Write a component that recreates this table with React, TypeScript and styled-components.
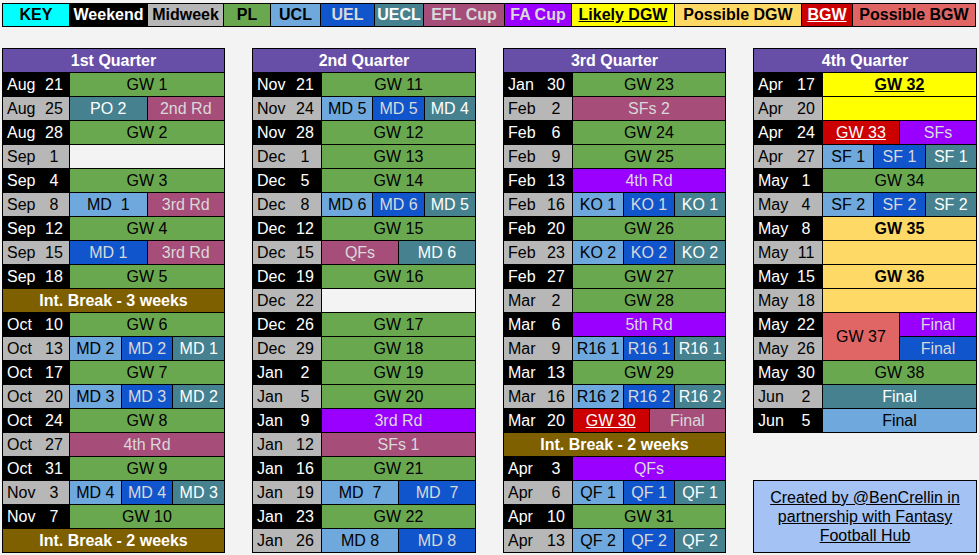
import * as React from 'react';
import styled, { createGlobalStyle } from 'styled-components';

type Kind =
	| 'pl'
	| 'ucl'
	| 'uel'
	| 'uecl'
	| 'efl'
	| 'fa'
	| 'likely'
	| 'possible'
	| 'bgw'
	| 'pbgw'
	| 'empty';

type Swatch = { bg: string; fg: string; bold?: boolean; u?: boolean };

const palette: Record<Kind, Swatch> = {
	pl: { bg: '#6aa84f', fg: '#000000' },
	ucl: { bg: '#6fa8dc', fg: '#000000' },
	uel: { bg: '#1155cc', fg: '#d9d9d9' },
	uecl: { bg: '#45818e', fg: '#ffffff' },
	efl: { bg: '#a64d79', fg: '#d9d9d9' },
	fa: { bg: '#9900ff', fg: '#d9d9d9' },
	likely: { bg: '#ffff00', fg: '#000000', bold: true, u: true },
	possible: { bg: '#ffd966', fg: '#000000', bold: true },
	bgw: { bg: '#cc0000', fg: '#ffffff', u: true },
	pbgw: { bg: '#e06666', fg: '#000000' },
	empty: { bg: '#f3f3f3', fg: '#000000' },
};

// [text, kind, span of 6, rows]
type Part = [string, Kind, number?, number?];
type Row =
	| { brk: string }
	| { date: string; we: boolean; parts: Part[] };

const gw = (n: number): Part[] => [[`GW ${n}`, 'pl', 6]];
const eur = (a: string, b: string, c: string): Part[] => [
	[a, 'ucl', 2],
	[b, 'uel', 2],
	[c, 'uecl', 2],
];

const r = (date: string, we: boolean, parts: Part[]): Row => ({ date, we, parts });

const quarters: { title: string; w: number; dw: number; rows: Row[] }[] = [
	{
		title: '1st Quarter',
		w: 223,
		dw: 66,
		rows: [
			r('Aug 21', true, gw(1)),
			r('Aug 25', false, [['PO 2', 'uecl', 3], ['2nd Rd', 'efl', 3]]),
			r('Aug 28', true, gw(2)),
			r('Sep 1', false, [['', 'empty', 6]]),
			r('Sep 4', true, gw(3)),
			r('Sep 8', false, [['MD  1', 'ucl', 3], ['3rd Rd', 'efl', 3]]),
			r('Sep 12', true, gw(4)),
			r('Sep 15', false, [['MD 1', 'uel', 3], ['3rd Rd', 'efl', 3]]),
			r('Sep 18', true, gw(5)),
			{ brk: 'Int. Break - 3 weeks' },
			r('Oct 10', true, gw(6)),
			r('Oct 13', false, eur('MD 2', 'MD 2', 'MD 1')),
			r('Oct 17', true, gw(7)),
			r('Oct 20', false, eur('MD 3', 'MD 3', 'MD 2')),
			r('Oct 24', true, gw(8)),
			r('Oct 27', false, [['4th Rd', 'efl', 6]]),
			r('Oct 31', true, gw(9)),
			r('Nov 3', false, eur('MD 4', 'MD 4', 'MD 3')),
			r('Nov 7', true, gw(10)),
			{ brk: 'Int. Break - 2 weeks' },
		],
	},
	{
		title: '2nd Quarter',
		w: 224,
		dw: 68,
		rows: [
			r('Nov 21', true, gw(11)),
			r('Nov 24', false, eur('MD 5', 'MD 5', 'MD 4')),
			r('Nov 28', true, gw(12)),
			r('Dec 1', false, gw(13)),
			r('Dec 5', true, gw(14)),
			r('Dec 8', false, eur('MD 6', 'MD 6', 'MD 5')),
			r('Dec 12', true, gw(15)),
			r('Dec 15', false, [['QFs', 'efl', 3], ['MD 6', 'uecl', 3]]),
			r('Dec 19', true, gw(16)),
			r('Dec 22', false, [['', 'empty', 6]]),
			r('Dec 26', true, gw(17)),
			r('Dec 29', false, gw(18)),
			r('Jan 2', true, gw(19)),
			r('Jan 5', false, gw(20)),
			r('Jan 9', true, [['3rd Rd', 'fa', 6]]),
			r('Jan 12', false, [['SFs 1', 'efl', 6]]),
			r('Jan 16', true, gw(21)),
			r('Jan 19', false, [['MD  7', 'ucl', 3], ['MD  7', 'uel', 3]]),
			r('Jan 23', true, gw(22)),
			r('Jan 26', false, [['MD 8', 'ucl', 3], ['MD 8', 'uel', 3]]),
		],
	},
	{
		title: '3rd Quarter',
		w: 223,
		dw: 68,
		rows: [
			r('Jan 30', true, gw(23)),
			r('Feb 2', false, [['SFs 2', 'efl', 6]]),
			r('Feb 6', true, gw(24)),
			r('Feb 9', false, gw(25)),
			r('Feb 13', true, [['4th Rd', 'fa', 6]]),
			r('Feb 16', false, eur('KO 1', 'KO 1', 'KO 1')),
			r('Feb 20', true, gw(26)),
			r('Feb 23', false, eur('KO 2', 'KO 2', 'KO 2')),
			r('Feb 27', true, gw(27)),
			r('Mar 2', false, gw(28)),
			r('Mar 6', true, [['5th Rd', 'fa', 6]]),
			r('Mar 9', false, eur('R16 1', 'R16 1', 'R16 1')),
			r('Mar 13', true, gw(29)),
			r('Mar 16', false, eur('R16 2', 'R16 2', 'R16 2')),
			r('Mar 20', true, [['GW 30', 'bgw', 3], ['Final', 'efl', 3]]),
			{ brk: 'Int. Break - 2 weeks' },
			r('Apr 3', true, [['QFs', 'fa', 6]]),
			r('Apr 6', false, eur('QF 1', 'QF 1', 'QF 1')),
			r('Apr 10', true, gw(31)),
			r('Apr 13', false, eur('QF 2', 'QF 2', 'QF 2')),
		],
	},
	{
		title: '4th Quarter',
		w: 224,
		dw: 68,
		rows: [
			r('Apr 17', true, [['GW 32', 'likely', 6]]),
			r('Apr 20', false, [['', 'likely', 6]]),
			r('Apr 24', true, [['GW 33', 'bgw', 3], ['SFs', 'fa', 3]]),
			r('Apr 27', false, eur('SF 1', 'SF 1', 'SF 1')),
			r('May 1', true, gw(34)),
			r('May 4', false, eur('SF 2', 'SF 2', 'SF 2')),
			r('May 8', true, [['GW 35', 'possible', 6]]),
			r('May 11', false, [['', 'possible', 6]]),
			r('May 15', true, [['GW 36', 'possible', 6]]),
			r('May 18', false, [['', 'possible', 6]]),
			r('May 22', true, [['GW 37', 'pbgw', 3, 2], ['Final', 'fa', 3]]),
			r('May 26', false, [['Final', 'uel', 3]]),
			r('May 30', true, gw(38)),
			r('Jun 2', false, [['Final', 'uecl', 6]]),
			r('Jun 5', true, [['Final', 'ucl', 6]]),
		],
	},
];

const keyItems: { label: string; w: number; bg: string; fg: string; u?: boolean }[] = [
	{ label: 'KEY', w: 66, bg: '#00ffff', fg: '#000000' },
	{ label: 'Weekend', w: 77, bg: '#000000', fg: '#ffffff' },
	{ label: 'Midweek', w: 75, bg: '#b7b7b7', fg: '#000000' },
	{ label: 'PL', w: 46, bg: '#6aa84f', fg: '#000000' },
	{ label: 'UCL', w: 49, bg: '#6fa8dc', fg: '#000000' },
	{ label: 'UEL', w: 53, bg: '#1155cc', fg: '#d9d9d9' },
	{ label: 'UECL', w: 48, bg: '#45818e', fg: '#ffffff' },
	{ label: 'EFL Cup', w: 80, bg: '#a64d79', fg: '#d9d9d9' },
	{ label: 'FA Cup', w: 66, bg: '#9900ff', fg: '#d9d9d9' },
	{ label: 'Likely DGW', w: 102, bg: '#ffff00', fg: '#000000', u: true },
	{ label: 'Possible DGW', w: 126, bg: '#ffd966', fg: '#000000' },
	{ label: 'BGW', w: 50, bg: '#cc0000', fg: '#ffffff', u: true },
	{ label: 'Possible BGW', w: 122, bg: '#e06666', fg: '#000000' },
];

const GlobalStyle = createGlobalStyle`
	html, body {
		margin: 0;
		padding: 0;
		background: #f3f3f3;
	}

	body {
		font-family: 'Liberation Sans', Arial, sans-serif;
		font-size: 16px;
	}
`;

const Page = styled.div`
	width: 979px;
	height: 555px;
	box-sizing: border-box;
	padding: 3px 0 0 2px;
	overflow: hidden;
`;

const KeyRow = styled.div`
	display: flex;
	gap: 1px;
	padding: 1px;
	background: #000000;
	width: fit-content;
`;

const KeyCell = styled.div<{ $w: number; $bg: string; $fg: string; $u?: boolean }>`
	width: ${(p) => p.$w}px;
	height: 22px;
	line-height: 22px;
	text-align: center;
	font-weight: bold;
	background: ${(p) => p.$bg};
	color: ${(p) => p.$fg};
	text-decoration: ${(p) => (p.$u ? 'underline' : 'none')};
	white-space: nowrap;
`;

const Board = styled.div`
	display: flex;
	gap: 27px;
	margin-top: 21px;
	align-items: stretch;
`;

const Column = styled.div<{ $w: number }>`
	width: ${(p) => p.$w}px;
	display: flex;
	flex-direction: column;
	justify-content: space-between;
`;

const Table = styled.div<{ $dw: number }>`
	display: grid;
	grid-template-columns: ${(p) => p.$dw}px repeat(6, 1fr);
	grid-auto-rows: 23px;
	gap: 1px;
	padding: 1px;
	background: #000000;
`;

const Title = styled.div`
	grid-column: 1 / -1;
	background: #674ea7;
	color: #ffffff;
	font-weight: bold;
	text-align: center;
	line-height: 23px;
`;

const Break = styled(Title)`
	background: #7f6000;
`;

const DateCell = styled.div<{ $we: boolean }>`
	display: flex;
	line-height: 23px;
	background: ${(p) => (p.$we ? '#000000' : '#b7b7b7')};
	color: ${(p) => (p.$we ? '#ffffff' : '#000000')};
`;

const Month = styled.span`
	width: 32px;
	padding-left: 4px;
`;

const Day = styled.span`
	flex: 1;
	text-align: center;
`;

const Cell = styled.div<{ $span: number; $rows: number; $s: Swatch }>`
	grid-column: span ${(p) => p.$span};
	grid-row: span ${(p) => p.$rows};
	display: flex;
	align-items: center;
	justify-content: center;
	background: ${(p) => p.$s.bg};
	color: ${(p) => p.$s.fg};
	font-weight: ${(p) => (p.$s.bold ? 'bold' : 'normal')};
	text-decoration: ${(p) => (p.$s.u ? 'underline' : 'none')};
	white-space: pre;
	overflow: hidden;
`;

const Credit = styled.div`
	height: 73px;
	box-sizing: border-box;
	border: 1px solid #000000;
	background: #a4c2f4;
	color: #000000;
	display: flex;
	align-items: center;
	justify-content: center;
	text-align: center;
	line-height: 19px;
	text-decoration: underline;
`;

const Quarter: React.FC<{ title: string; dw: number; rows: Row[] }> = ({ title, dw, rows }) => (
	<Table $dw={dw}>
		<Title>{title}</Title>
		{rows.map((row, i) => {
			if ('brk' in row) return <Break key={i}>{row.brk}</Break>;
			const [mon, day] = row.date.split(' ');
			return (
				<React.Fragment key={i}>
					<DateCell $we={row.we}>
						<Month>{mon}</Month>
						<Day>{day}</Day>
					</DateCell>
					{row.parts.map(([text, kind, span = 6, rowsSpan = 1], j) => (
						<Cell key={j} $span={span} $rows={rowsSpan} $s={palette[kind]}>
							{text}
						</Cell>
					))}
				</React.Fragment>
			);
		})}
	</Table>
);

export default function App() {
	return (
		<Page>
			<GlobalStyle />
			<KeyRow>
				{keyItems.map((k) => (
					<KeyCell key={k.label} $w={k.w} $bg={k.bg} $fg={k.fg} $u={k.u}>
						{k.label}
					</KeyCell>
				))}
			</KeyRow>
			<Board>
				{quarters.map((q, i) => (
					<Column key={q.title} $w={q.w}>
						<Quarter title={q.title} dw={q.dw} rows={q.rows} />
						{i === 3 && (
							<Credit>
								Created by @BenCrellin in
								<br />
								partnership with Fantasy
								<br />
								Football Hub
							</Credit>
						)}
					</Column>
				))}
			</Board>
		</Page>
	);
}
